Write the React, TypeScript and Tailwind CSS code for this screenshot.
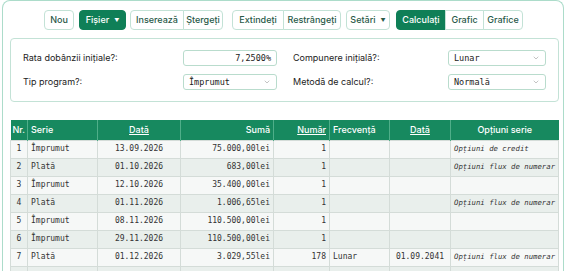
import { ChevronDown } from 'lucide-react';

const mono = { fontFamily: '"DejaVu Sans Mono", monospace' };

type Row = {
  nr: string;
  serie: string;
  data: string;
  suma: string;
  numar: string;
  frecventa: string;
  dataFinal: string;
  optiuni: string;
};

const rows: Row[] = [
  { nr: '1', serie: 'Împrumut', data: '13.09.2026', suma: '75.000,00lei', numar: '1', frecventa: '', dataFinal: '', optiuni: 'Opțiuni de credit' },
  { nr: '2', serie: 'Plată', data: '01.10.2026', suma: '683,00lei', numar: '1', frecventa: '', dataFinal: '', optiuni: 'Opțiuni flux de numerar' },
  { nr: '3', serie: 'Împrumut', data: '12.10.2026', suma: '35.400,00lei', numar: '1', frecventa: '', dataFinal: '', optiuni: '' },
  { nr: '4', serie: 'Plată', data: '01.11.2026', suma: '1.006,65lei', numar: '1', frecventa: '', dataFinal: '', optiuni: 'Opțiuni flux de numerar' },
  { nr: '5', serie: 'Împrumut', data: '08.11.2026', suma: '110.500,00lei', numar: '1', frecventa: '', dataFinal: '', optiuni: '' },
  { nr: '6', serie: 'Împrumut', data: '29.11.2026', suma: '110.500,00lei', numar: '1', frecventa: '', dataFinal: '', optiuni: '' },
  { nr: '7', serie: 'Plată', data: '01.12.2026', suma: '3.029,55lei', numar: '178', frecventa: 'Lunar', dataFinal: '01.09.2041', optiuni: 'Opțiuni flux de numerar' },
  // next row only peeks in at the bottom edge
  { nr: '', serie: '', data: '', suma: '', numar: '', frecventa: '', dataFinal: '', optiuni: '' },
];

function Btn({ children, active = false, caret = false, cls = '' }: { children: React.ReactNode; active?: boolean; caret?: boolean; cls?: string }) {
  return (
    <div
      className={`flex h-[20px] items-center justify-center gap-[5px] text-[9px] font-medium ${
        active ? 'bg-[#0f7f57] text-white border border-[#0f7f57]' : 'bg-white text-[#2a5a49] border border-[#c3e2d6]'
      } ${cls}`}
    >
      {children}
      {caret && <span className="text-[5px] leading-none">▼</span>}
    </div>
  );
}

function Select({ value, w }: { value: string; w: string }) {
  return (
    <div className={`flex h-[16px] ${w} items-center justify-between rounded-[3px] border border-[#b9dccd] bg-white pl-[5px] pr-[5px] text-[8.5px] text-[#222]`} style={mono}>
      <span>{value}</span>
      <ChevronDown size={8} strokeWidth={1.5} className="text-[#888]" />
    </div>
  );
}

export default function App() {
  return (
    <div className="h-[271px] overflow-hidden bg-white" style={{ fontFamily: 'Inter, "Noto Sans", sans-serif' }}>
      <div className="ml-[2px] w-[562px] rounded-t-[8px] border border-b-0 border-[#acdcca] pb-4 pl-[7px] pr-[2px] pt-[9px]">
        {/* Toolbar */}
        <div className="flex items-center pl-[34px]">
          <Btn cls="w-[30px] rounded-[4px]">Nou</Btn>
          <Btn active caret cls="ml-[5px] w-[47px] rounded-[4px]">Fișier</Btn>
          <div className="ml-[4px] flex">
            <Btn cls="w-[54px] rounded-l-[4px]">Inserează</Btn>
            <Btn cls="-ml-px w-[40px] rounded-r-[4px]">Ștergeți</Btn>
          </div>
          <div className="ml-[9px] flex">
            <Btn cls="w-[52px] rounded-l-[4px]">Extindeți</Btn>
            <Btn cls="-ml-px w-[58px] rounded-r-[4px]">Restrângeți</Btn>
          </div>
          <Btn caret cls="ml-[5px] w-[44px] rounded-[4px]">Setări</Btn>
          <div className="ml-[6px] flex">
            <Btn active cls="w-[50px] rounded-l-[4px]">Calculați</Btn>
            <Btn cls="-ml-px w-[39px]">Grafic</Btn>
            <Btn cls="-ml-px w-[40px] rounded-r-[4px]">Grafice</Btn>
          </div>
        </div>

        {/* Settings */}
        <div className="mt-[8px] flex w-[549px] rounded-[4px] border border-[#c3e2d6] bg-white px-[12px] py-[11px] text-[9px] text-[#222]">
          <div className="flex w-[254px] flex-col gap-[8px]">
            <div className="flex h-[16px] items-center justify-between">
              <span>Rata dobânzii inițiale?:</span>
              <div className="flex h-[16px] w-[94px] items-center justify-end rounded-[3px] border border-[#b9dccd] bg-white pr-[5px] text-[8.5px]" style={mono}>
                7,2500%
              </div>
            </div>
            <div className="flex h-[16px] items-center justify-between">
              <span>Tip program?:</span>
              <Select value="Împrumut" w="w-[94px]" />
            </div>
          </div>
          <div className="ml-[16px] flex flex-1 flex-col gap-[8px]">
            <div className="flex h-[16px] items-center justify-between">
              <span>Compunere inițială?:</span>
              <Select value="Lunar" w="w-[98px]" />
            </div>
            <div className="flex h-[16px] items-center justify-between">
              <span>Metodă de calcul?:</span>
              <Select value="Normală" w="w-[98px]" />
            </div>
          </div>
        </div>

        {/* Table */}
        <table className="mt-[18px] w-[549px] table-fixed border-collapse whitespace-nowrap">
          <colgroup>
            <col className="w-[17px]" />
            <col className="w-[70px]" />
            <col className="w-[83px]" />
            <col className="w-[93px]" />
            <col className="w-[56px]" />
            <col className="w-[60px]" />
            <col className="w-[61px]" />
            <col />
          </colgroup>
          <thead>
            <tr className="h-[20px] bg-[#17895f] text-[9px] text-white">
              <th className="border-r border-[#4fae89] px-[2px] text-left font-medium">Nr.</th>
              <th className="border-r border-[#4fae89] px-[3px] text-left font-medium">Serie</th>
              <th className="border-r border-[#4fae89] px-[3px] text-center font-medium underline">Dată</th>
              <th className="border-r border-[#4fae89] px-[3px] text-right font-medium">Sumă</th>
              <th className="border-r border-[#4fae89] px-[3px] text-right font-medium underline">Număr</th>
              <th className="border-r border-[#4fae89] px-[3px] text-left font-medium">Frecvență</th>
              <th className="border-r border-[#4fae89] px-[3px] text-center font-medium underline">Dată</th>
              <th className="px-[3px] text-center font-medium">Opțiuni serie</th>
            </tr>
          </thead>
          <tbody className="text-[8px] text-[#333]" style={mono}>
            {rows.map((r, i) => (
              <tr key={i} className={`h-[18px] ${i % 2 === 0 ? 'bg-[#f6f8f7]' : 'bg-[#e9efec]'}`}>
                <td className="border border-[#d4dcd8] px-[2px] text-center">{r.nr}</td>
                <td className="border border-[#d4dcd8] px-[3px]">{r.serie}</td>
                <td className="border border-[#d4dcd8] px-[3px] text-center">{r.data}</td>
                <td className="border border-[#d4dcd8] px-[3px] text-right">{r.suma}</td>
                <td className="border border-[#d4dcd8] px-[3px] text-right">{r.numar}</td>
                <td className="border border-[#d4dcd8] px-[3px]">{r.frecventa}</td>
                <td className="border border-[#d4dcd8] px-[3px] text-center">{r.dataFinal}</td>
                <td className="border border-[#d4dcd8] px-[3px] text-[7.3px] italic">{r.optiuni}</td>
              </tr>
            ))}
          </tbody>
        </table>
      </div>
    </div>
  );
}
